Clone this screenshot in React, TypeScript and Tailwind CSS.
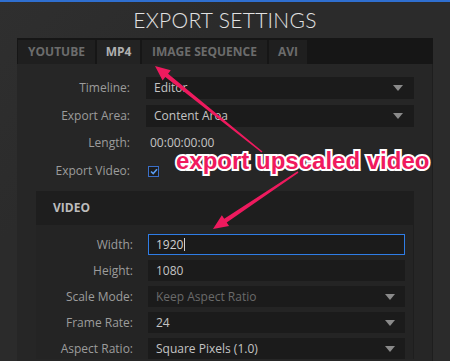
import React from "react";

function arrowPoints(tx: number, ty: number, hx: number, hy: number) {
  const dx = hx - tx;
  const dy = hy - ty;
  const len = Math.hypot(dx, dy);
  const ux = dx / len;
  const uy = dy / len;
  const px = -uy;
  const py = ux;
  const headLen = 15;
  const headHalf = 6.5;
  const shaftHead = 2.2;
  const shaftTail = 0.8;
  const bx = hx - ux * headLen;
  const by = hy - uy * headLen;
  const pts: [number, number][] = [
    [tx + px * shaftTail, ty + py * shaftTail],
    [bx + px * shaftHead, by + py * shaftHead],
    [bx + px * headHalf, by + py * headHalf],
    [hx, hy],
    [bx - px * headHalf, by - py * headHalf],
    [bx - px * shaftHead, by - py * shaftHead],
    [tx - px * shaftTail, ty - py * shaftTail],
  ];
  return pts.map((p) => p.join(",")).join(" ");
}

function Caret() {
  return (
    <svg width="10" height="6" viewBox="0 0 10 6" className="shrink-0">
      <path d="M0 0 L10 0 L5 6 Z" fill="#8a8a8a" />
    </svg>
  );
}

function Select({ value, dim, caretRight = "pr-[11px]" }: { value: string; dim?: boolean; caretRight?: string }) {
  return (
    <div className={`flex h-full items-center justify-between bg-[#1b1b1b] pl-[8px] ${caretRight}`}>
      <span className={dim ? "text-[#6a6a6a]" : "text-[#c4c4c4]"}>{value}</span>
      <Caret />
    </div>
  );
}

export default function App() {
  const font = { fontFamily: '"Open Sans", "DejaVu Sans", sans-serif' };
  return (
    <div
      className="relative h-[361px] w-[450px] overflow-hidden bg-[linear-gradient(135deg,#2f2f2f_0%,#2b2b2b_30%,#2b2b2b_100%)] text-[12px]"
      style={font}
    >
      <div className="h-[2px] bg-[#2f6fd0]" />
      <div
        className="flex h-[36px] items-start justify-center pt-[2px] text-[21px] font-light tracking-[0.3px] text-[#e2e2e2]"
        style={{ fontFamily: 'Lato, "Open Sans", sans-serif' }}
      >
        EXPORT SETTINGS
      </div>

      <div className="mx-[17px] flex flex-col">
        {/* Tab bar */}
        <div className="flex h-[26px] items-stretch gap-[2px] bg-[#161616] pl-[1px] pt-[2px] text-[12px] font-bold">
          <div className="flex w-[77px] items-center justify-center bg-[#1f1f1f] text-[#6c6c6c]">YOUTUBE</div>
          <div className="flex w-[43px] items-center justify-center bg-[#232323] text-[#b0b0b0]">MP4</div>
          <div className="flex w-[125px] items-center justify-center bg-[#1f1f1f] text-[#6c6c6c]">IMAGE SEQUENCE</div>
          <div className="flex w-[38px] items-center justify-center bg-[#1f1f1f] text-[#6c6c6c]">AVI</div>
        </div>

        {/* Panel */}
        <div className="flex h-[300px] flex-col border-r border-[#1e1e1e] bg-[#262626] pt-[13px]">
          <div className="flex h-[22px] items-center">
            <div className="w-[113px] text-right text-[#9c9c9c]">Timeline:</div>
            <div className="ml-[16px] mr-[18px] h-full flex-1">
              <Select value="Editor" />
            </div>
          </div>
          <div className="mt-[6px] flex h-[22px] items-center">
            <div className="w-[113px] text-right text-[#9c9c9c]">Export Area:</div>
            <div className="ml-[16px] mr-[18px] h-full flex-1">
              <Select value="Content Area" />
            </div>
          </div>
          <div className="mt-[5px] flex h-[22px] items-center">
            <div className="w-[113px] text-right text-[#9c9c9c]">Length:</div>
            <div className="ml-[20px] text-[#c4c4c4]">00:00:00:00</div>
          </div>
          <div className="mt-[6px] flex h-[22px] items-center">
            <div className="w-[113px] text-right text-[#9c9c9c]">Export Video:</div>
            <div className="ml-[18px] flex h-[11px] w-[11px] items-center justify-center border border-[#3a6fc8] bg-[#1c1c1c]">
              <svg width="8" height="7" viewBox="0 0 8 7">
                <path d="M1 3.5 L3.2 5.6 L7 1.2" stroke="#5a9cf0" strokeWidth="1.6" fill="none" />
              </svg>
            </div>
          </div>

          {/* Video subpanel */}
          <div className="ml-[19px] mr-[18px] mt-[9px] flex flex-col border-r border-[#1e1e1e] bg-[#242424]">
            <div className="flex h-[34px] items-center bg-[#1e1e1e] pl-[17px] text-[12px] font-bold text-[#bcbcbc]">VIDEO</div>
            <div className="flex flex-col gap-[5px] pt-[9px]">
              <div className="flex h-[21px] items-center">
                <div className="w-[97px] text-right text-[#9c9c9c]">Width:</div>
                <div className="ml-[15px] mr-[8px] flex h-full flex-1 items-center border border-[#2f7de6] bg-[#1b1b1b] pl-[7px] text-[#d0d0d0]">
                  1920<span className="ml-[1px] inline-block h-[13px] w-[1px] bg-[#d0d0d0]" />
                </div>
              </div>
              <div className="flex h-[21px] items-center">
                <div className="w-[97px] text-right text-[#9c9c9c]">Height:</div>
                <div className="ml-[15px] mr-[8px] flex h-full flex-1 items-center bg-[#1b1b1b] pl-[8px] text-[#c4c4c4]">1080</div>
              </div>
              <div className="flex h-[21px] items-center">
                <div className="w-[97px] text-right text-[#9c9c9c]">Scale Mode:</div>
                <div className="ml-[15px] mr-[8px] h-full flex-1">
                  <Select value="Keep Aspect Ratio" dim caretRight="pr-[10px]" />
                </div>
              </div>
              <div className="flex h-[21px] items-center">
                <div className="w-[97px] text-right text-[#9c9c9c]">Frame Rate:</div>
                <div className="ml-[15px] mr-[8px] h-full flex-1">
                  <Select value="24" caretRight="pr-[10px]" />
                </div>
              </div>
              <div className="flex h-[21px] items-center">
                <div className="w-[97px] text-right text-[#9c9c9c]">Aspect Ratio:</div>
                <div className="ml-[15px] mr-[8px] h-full flex-1">
                  <Select value="Square Pixels (1.0)" caretRight="pr-[10px]" />
                </div>
              </div>
            </div>
          </div>
        </div>
      </div>

      {/* Annotation overlay */}
      <svg className="pointer-events-none absolute left-0 top-0" width="450" height="361">
        <polygon points={arrowPoints(262, 152, 155, 66)} fill="#ee1a5e" />
        <polygon points={arrowPoints(298, 172, 213, 229)} fill="#ee1a5e" />
      </svg>
      <div
        className="pointer-events-none absolute left-[176px] top-[151px] text-[24px] font-bold leading-[20px] text-[#f01a5e] [-webkit-text-stroke:4px_white] [paint-order:stroke_fill]"
        style={{ fontFamily: '"Liberation Sans", Arial, sans-serif' }}
      >
        export upscaled video
      </div>
    </div>
  );
}
